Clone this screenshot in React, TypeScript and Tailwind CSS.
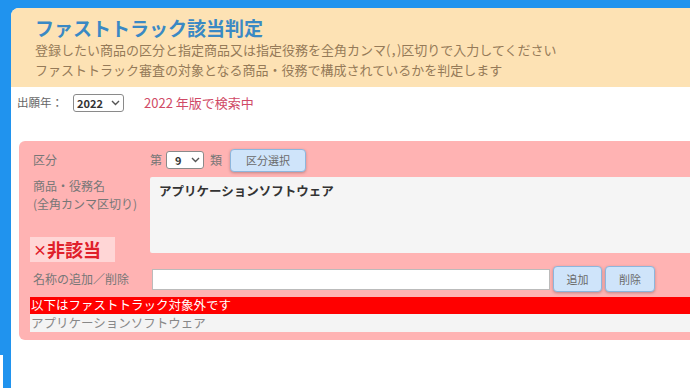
import React from "react";

const jp = "font-['Noto_Sans_CJK_JP','Noto_Sans',sans-serif]";

function Select({ value, className }: { value: string; className: string }) {
  return (
    <div
      className={`flex items-center justify-between rounded-[3px] border border-[#8a8a8a] bg-white pl-[3px] pr-[3px] text-[11px] font-bold text-[#333] ${className}`}
    >
      <span>{value}</span>
      <svg width="9" height="6" viewBox="0 0 9 6" className="text-[#555]">
        <path d="M1 1l3.5 3.5L8 1" fill="none" stroke="currentColor" strokeWidth="1.4" />
      </svg>
    </div>
  );
}

function BlueButton({ label, className }: { label: string; className: string }) {
  return (
    <button
      type="button"
      className={`rounded-[4px] border border-[#8db6dd] bg-[#cfe4fa] text-[11px] text-[#6a6a6a] shadow-[0_1px_3px_rgba(0,0,0,0.25)] ${className}`}
    >
      {label}
    </button>
  );
}

export default function App() {
  return (
    <div className={`flex h-[388px] w-[690px] overflow-hidden bg-[#2093ee] ${jp}`}>
      <div className="flex w-[11px] shrink-0 flex-col">
        <div className="mt-auto h-[33px] w-[3px] bg-white" />
      </div>

      <div className="mt-[8px] w-[700px] shrink-0 overflow-hidden rounded-tl-[8px] bg-white">
        <div className="h-[79px] bg-[#fde2b4] pt-[7px] pl-[24px]">
          <h1 className="text-[19px] leading-[25px] font-bold text-[#3a89c4]">ファストトラック該当判定</h1>
          <p className="text-[13px] leading-[20px] text-[#957a58]">
            登録したい商品の区分と指定商品又は指定役務を全角カンマ(，)区切りで入力してください
          </p>
          <p className="text-[13px] leading-[20px] text-[#957a58]">
            ファストトラック審査の対象となる商品・役務で構成されているかを判定します
          </p>
        </div>

        <div className="mt-[6px] flex h-[20px] items-center pl-[6px]">
          <span className="text-[11.5px] text-[#666]">出願年：</span>
          <Select value="2022" className="ml-[10px] h-[18px] w-[51px]" />
          <span className="ml-[20px] text-[13px] text-[#d04a66]">2022 年版で検索中</span>
        </div>

        <div className="mt-[28px] ml-[8px] w-[700px] rounded-[6px] bg-[#ffb3b3] pt-[7px] pb-[8px] text-[12px]">
          <div className="flex h-[24px] items-center">
            <span className="w-[131px] shrink-0 pl-[14px] text-[#777]">区分</span>
            <span className="text-[#777]">第</span>
            <Select value="9" className="ml-[4px] h-[18px] w-[38px] pl-[8px]" />
            <span className="ml-[6px] text-[#777]">類</span>
            <BlueButton label="区分選択" className="ml-[8px] h-[23px] w-[76px]" />
          </div>

          <div className="mt-[5px] flex items-start">
            <div className="flex h-[85px] w-[131px] shrink-0 flex-col">
              <span className="pl-[14px] leading-[18px] text-[#777]">商品・役務名</span>
              <span className="pl-[14px] leading-[18px] text-[#777]">(全角カンマ区切り)</span>
              <div className="mt-auto ml-[11px] flex h-[25px] w-[85px] items-center bg-[#ffd6d6] pl-[3px] text-[18px] font-bold text-[#e0202a]">
                <span className="text-[14px]">×</span>非該当
              </div>
            </div>
            <div className="h-[76px] flex-1 rounded-[2px] bg-[#f5f5f5] px-[9px] py-[5px] text-[12.5px] font-bold text-[#333]">
              アプリケーションソフトウェア
            </div>
          </div>

          <div className="mt-[4px] flex h-[26px] items-center">
            <span className="w-[133px] shrink-0 pl-[14px] text-[#777]">名称の追加／削除</span>
            <div className="h-[21px] w-[398px] border border-[#bbb] bg-white" />
            <BlueButton label="追加" className="ml-[3px] h-[26px] w-[49px]" />
            <BlueButton label="削除" className="ml-[3px] h-[26px] w-[50px]" />
          </div>

          <div className="mt-[5px] ml-[11px] flex h-[17px] items-center bg-[#ff0000] pl-[1px] text-[12.5px] text-white">
            以下はファストトラック対象外です
          </div>
          <div className="ml-[11px] flex h-[18px] items-center bg-[#f4f4f4] pl-[1px] text-[12.5px] text-[#888]">
            アプリケーションソフトウェア
          </div>
        </div>
      </div>
    </div>
  );
}
